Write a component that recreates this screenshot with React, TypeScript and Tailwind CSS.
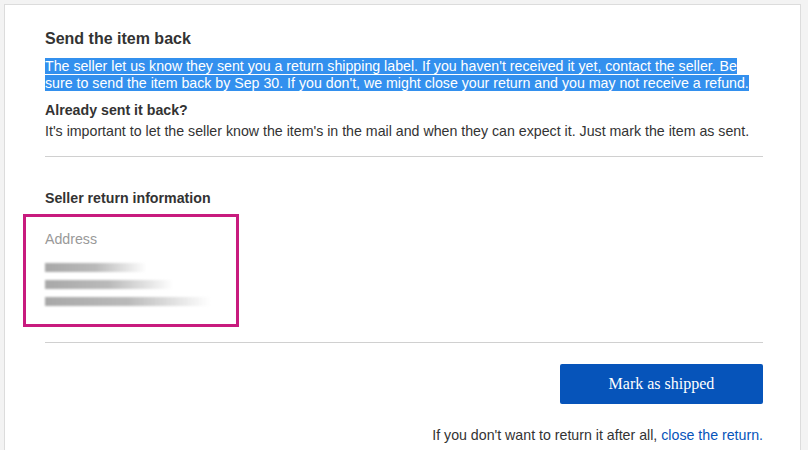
export default function App() {
  return (
    <div className="min-h-[450px] bg-[#f3f3f3] pl-1 pr-[7px] pt-1 font-['Liberation_Sans',Arial,sans-serif] text-[#333]">
      <div className="min-h-[460px] border border-[#dcdcdc] bg-white pl-10 pr-[37px] pt-[24px]">
        <h2 className="text-[16px] font-bold leading-5">Send the item back</h2>
        <p className="mt-[9px] text-[14.2px] leading-[17px]">
          <span className="bg-[#3390ee] text-white">
            The seller let us know they sent you a return shipping label. If you haven't received it yet, contact the seller. Be
            <br />
            sure to send the item back by Sep 30. If you don't, we might close your return and you may not receive a refund.
          </span>
        </p>
        <h3 className="mt-[10px] text-[14.2px] font-bold leading-[17px]">Already sent it back?</h3>
        <p className="mt-[4px] text-[14.2px] leading-[17px]">
          It's important to let the seller know the item's in the mail and when they can expect it. Just mark the item as sent.
        </p>
        <div className="mt-4 border-t border-[#d0d0d0]" />

        <h3 className="mt-[33px] text-[14.2px] font-bold leading-[17px]">Seller return information</h3>
        <div className="-ml-[22px] mt-[7px] h-[113px] w-[216px] border-[3px] border-[#c81b7e] pl-[19px] pt-[14px]">
          <div className="text-[14.2px] leading-[17px] text-[#999]">Address</div>
          <div className="mt-[15px] flex flex-col gap-[8px]">
            <div className="h-[9px] w-[102px] bg-gradient-to-r from-[#a8a8a8] via-[#bababa] to-transparent blur-[1px]" />
            <div className="h-[9px] w-[128px] bg-gradient-to-r from-[#a8a8a8] via-[#bababa] to-transparent blur-[1px]" />
            <div className="h-[9px] w-[165px] bg-gradient-to-r from-[#a8a8a8] via-[#bababa] to-transparent blur-[1px]" />
          </div>
        </div>
        <div className="mt-[15px] border-t border-[#d0d0d0]" />

        <div className="mt-[21px] flex justify-end">
          <button className="h-[40px] w-[203px] rounded-[2px] bg-[#0654ba] font-['Liberation_Serif',serif] text-[16px] text-white">
            Mark as shipped
          </button>
        </div>
        <p className="mt-[23px] text-right text-[14.2px] leading-[17px]">
          If you don't want to return it after all, <a className="text-[#0654ba]">close the return.</a>
        </p>
      </div>
    </div>
  )
}
